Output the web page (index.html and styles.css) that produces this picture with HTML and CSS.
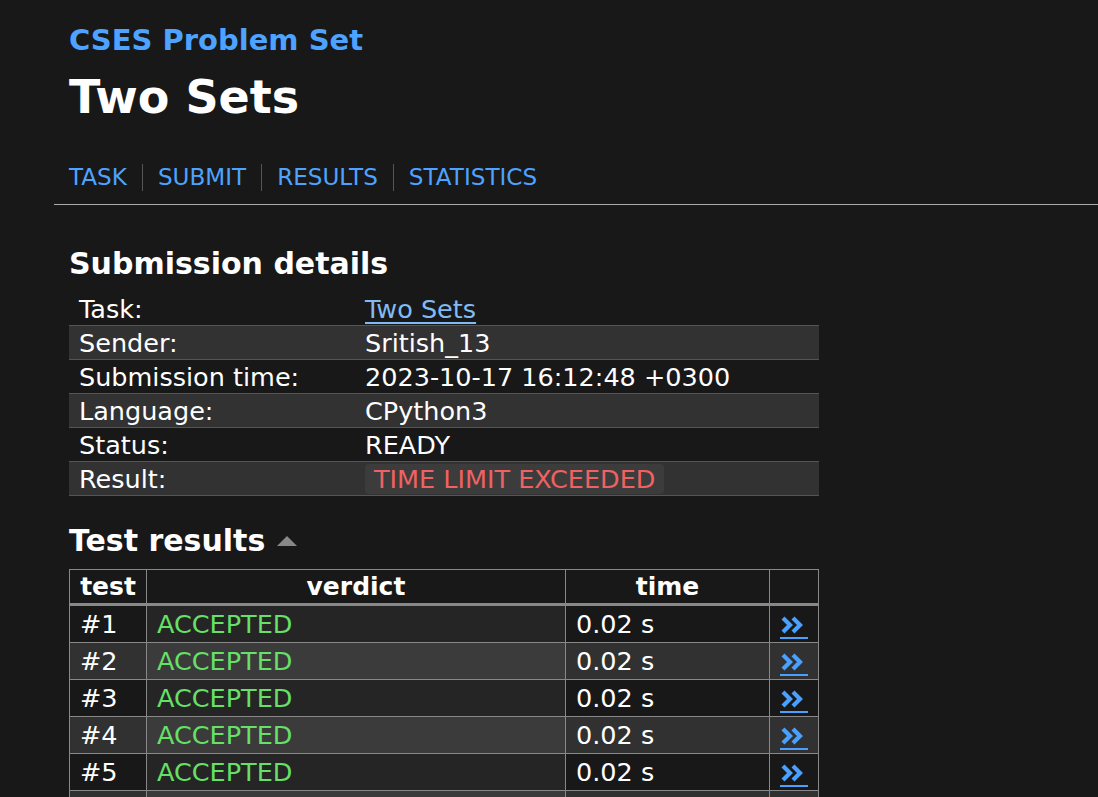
FILE: index.html
```html
<!DOCTYPE html>
<html>
<head>
<meta charset="utf-8">
<link rel="stylesheet" href="styles.css">
</head>
<body>
<div class="page">
  <div class="header">
    <a class="site" href="#">CSES Problem Set</a>
    <h1 class="title">Two Sets</h1>
    <nav class="nav">
      <a href="#">TASK</a>
      <a href="#">SUBMIT</a>
      <a href="#">RESULTS</a>
      <a href="#">STATISTICS</a>
    </nav>
  </div>
  <div class="content">
    <h2 class="h2">Submission details</h2>
    <table class="details">
      <tr><td class="k">Task:</td><td><a class="tlink" href="#">Two Sets</a></td></tr>
      <tr><td class="k">Sender:</td><td>Sritish_13</td></tr>
      <tr><td class="k">Submission time:</td><td>2023-10-17 16:12:48 +0300</td></tr>
      <tr><td class="k">Language:</td><td>CPython3</td></tr>
      <tr><td class="k">Status:</td><td>READY</td></tr>
      <tr><td class="k">Result:</td><td><span class="badge">TIME LIMIT EXCEEDED</span></td></tr>
    </table>
    <h2 class="h2 tr">Test results <span class="tri"></span></h2>
    <table class="tests">
      <thead>
        <tr><th class="c1">test</th><th class="c2">verdict</th><th class="c3">time</th><th class="c4"></th></tr>
      </thead>
      <tbody>
        <tr><td>#1</td><td class="v">ACCEPTED</td><td>0.02 s</td><td class="go"><a href="#"><svg width="26" height="18" viewBox="0 0 26 18"><path d="M2 2 L9 9 L2 16 M12 2 L19 9 L12 16" fill="none" stroke="#4aa0ff" stroke-width="4.2" stroke-linejoin="miter"/></svg></a></td></tr>
        <tr><td>#2</td><td class="v">ACCEPTED</td><td>0.02 s</td><td class="go"><a href="#"><svg width="26" height="18" viewBox="0 0 26 18"><path d="M2 2 L9 9 L2 16 M12 2 L19 9 L12 16" fill="none" stroke="#4aa0ff" stroke-width="4.2" stroke-linejoin="miter"/></svg></a></td></tr>
        <tr><td>#3</td><td class="v">ACCEPTED</td><td>0.02 s</td><td class="go"><a href="#"><svg width="26" height="18" viewBox="0 0 26 18"><path d="M2 2 L9 9 L2 16 M12 2 L19 9 L12 16" fill="none" stroke="#4aa0ff" stroke-width="4.2" stroke-linejoin="miter"/></svg></a></td></tr>
        <tr><td>#4</td><td class="v">ACCEPTED</td><td>0.02 s</td><td class="go"><a href="#"><svg width="26" height="18" viewBox="0 0 26 18"><path d="M2 2 L9 9 L2 16 M12 2 L19 9 L12 16" fill="none" stroke="#4aa0ff" stroke-width="4.2" stroke-linejoin="miter"/></svg></a></td></tr>
        <tr><td>#5</td><td class="v">ACCEPTED</td><td>0.02 s</td><td class="go"><a href="#"><svg width="26" height="18" viewBox="0 0 26 18"><path d="M2 2 L9 9 L2 16 M12 2 L19 9 L12 16" fill="none" stroke="#4aa0ff" stroke-width="4.2" stroke-linejoin="miter"/></svg></a></td></tr>
        <tr class="last"><td></td><td class="v"></td><td></td><td class="go"></td></tr>
      </tbody>
    </table>
  </div>
</div>
</body>
</html>
```
FILE: styles.css
```css
html, body {
  margin: 0;
  padding: 0;
  background: #181818;
  color: #ffffff;
  font-family: "DejaVu Sans", "Noto Sans", sans-serif;
  font-size: 25.5px;
  overflow: hidden;
  height: 797px;
}
a { color: #4da3ff; text-decoration: none; }
.page {
  margin-left: 54px;
}
.header {
  padding: 21px 15px 0 15px;
  border-bottom: 1px solid #aaaaaa;
}
.site {
  display: block;
  font-size: 29px;
  font-weight: bold;
  line-height: 38px;
}
.title {
  margin: 8px 0 0 0;
  font-size: 46px;
  line-height: 60px;
  font-weight: bold;
}
.nav {
  display: flex;
  margin-top: 37px;
  padding-bottom: 13px;
}
.nav a {
  font-size: 23.1px;
  line-height: 27px;
  padding: 0 15px;
  border-left: 1px solid #555;
}
.nav a:first-child { padding-left: 0; border-left: none; }
.content {
  padding: 0 15px;
}
.h2 {
  margin: 40px 0 9px 0;
  font-size: 30px;
  line-height: 38px;
  font-weight: bold;
}
.details {
  width: 750px;
  border-collapse: collapse;
}
.details td {
  padding: 0 10px;
  height: 33px;
  line-height: 32px;
  border-bottom: 1px solid #555;
}
.details tr:nth-child(even) td { background: #323232; }
.details .k { width: 266px; }
.tlink { color: #80bbf5; text-decoration: underline; text-underline-offset: 4px; }
.badge {
  display: inline-block;
  background: #3c3c3c;
  color: #f06262;
  border-radius: 4px;
  padding: 0 9px;
  line-height: 30px;
}
.tr { margin-top: 26px; margin-bottom: 9px; display: flex; align-items: center; }
.tri {
  display: inline-block;
  width: 0; height: 0;
  border-left: 10px solid transparent;
  border-right: 10px solid transparent;
  border-bottom: 10px solid #888;
  margin-left: 12px;
}
.tests {
  width: 750px;
  border-collapse: collapse;
}
.tests th {
  border: 1px solid #888;
  border-bottom: 3px solid #888;
  font-weight: bold;
  font-size: 25px;
  height: 33px;
  padding: 0 10px;
  line-height: 30px;
}
.tests .c1 { width: 56px; }
.tests .c3 { width: 183px; }
.tests .c4 { width: 27px; }
.tests td {
  border: 1px solid #888;
  height: 36px;
  padding: 0 10px;
  line-height: 34px;
}
.tests tbody tr:nth-child(even) td { background: #313131; }
.tests td.v { color: #66e066; background: #252525; }
.tests tbody tr:nth-child(even) td.v { background: #3b3b3b; }
.go { text-align: center; }
.go a { display: inline-block; border-bottom: 2px solid #4aa0ff; line-height: 0; padding: 2px 1px 3px; vertical-align: middle; }
```
